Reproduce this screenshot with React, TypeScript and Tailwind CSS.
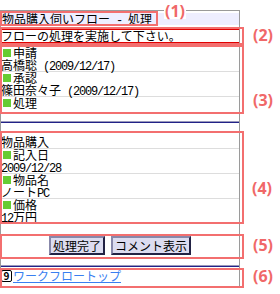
import React from "react";

const jp = "font-['Noto_Sans_CJK_JP',sans-serif] text-[12px] leading-[12px] text-black";

// half-width run: 6px per character like the phone font
function A({ children }: { children: React.ReactNode }) {
  return (
    <span className="font-['Liberation_Mono',monospace] text-[12px] tracking-[-1.2px] whitespace-pre">
      {children}
    </span>
  );
}

function Mark({ children }: { children: React.ReactNode }) {
  return (
    <div className="flex h-[12px] items-center">
      <span className="mx-[2px] inline-block h-[8px] w-[8px] bg-[#66cc33]" />
      <span>{children}</span>
    </div>
  );
}

function Line({ children }: { children: React.ReactNode }) {
  return <div className="h-[12px] whitespace-nowrap">{children}</div>;
}

const Sep = () => <div className="h-px bg-[#dddddd]" />;

const hr = "h-[2px] border-t border-b border-t-[#9999bb] border-b-[#222288]";
const btn =
  "h-[19px] border-2 border-solid border-t-[#8888aa] border-l-[#8888aa] border-r-[#222244] border-b-[#222244] bg-[#dcdcf0] px-[2px] leading-[14px] text-black";

function Box({ className }: { className: string }) {
  return <div className={`absolute border-2 border-[#f36f6f] ${className}`} />;
}

function Label({ text, className }: { text: string; className: string }) {
  return (
    <div
      className={`absolute bg-white px-[1px] font-['Noto_Sans',sans-serif] text-[16px] font-bold leading-[16px] text-[#f06868] ${className}`}
    >
      {text}
    </div>
  );
}

export default function App() {
  return (
    <div className="relative h-[294px] w-[280px] overflow-hidden bg-white">
      <div className={`mt-[10px] flex h-[278px] w-[240px] flex-col border border-[#9a9a9a] ${jp}`}>
        <div className="mt-[2px] h-[12px] whitespace-nowrap bg-[#eeeeff] pl-[1px]">
          物品購入伺いフロー<A> - </A>処理
        </div>
        <div className="mt-[4px] h-[14px] whitespace-nowrap border-y border-[#e00000]">
          フローの処理を実施して下さい。
        </div>

        <div className="mt-[4px]">
          <Mark>申請</Mark>
          <Line>
            高橋聡<A> (2009/12/17)</A>
          </Line>
          <Sep />
          <Mark>承認</Mark>
          <Line>
            篠田奈々子<A> (2009/12/17)</A>
          </Line>
          <Sep />
          <Mark>処理</Mark>
        </div>

        <div className={`mt-[12px] ${hr}`} />

        <div className="mt-[13px]">
          <Line>物品購入</Line>
          <Sep />
          <Mark>記入日</Mark>
          <Line>
            <A>2009/12/28</A>
          </Line>
          <Sep />
          <Mark>物品名</Mark>
          <Line>
            ノート<A>PC</A>
          </Line>
          <Sep />
          <Mark>価格</Mark>
          <Line>
            <A>12</A>万円
          </Line>
        </div>

        <div className="mt-[13px] flex justify-center gap-[6px]">
          <button type="button" className={btn}>
            処理完了
          </button>
          <button type="button" className={btn}>
            コメント表示
          </button>
        </div>

        <div className={`mt-[10px] ${hr}`} />

        <div className="mt-[3px] flex h-[12px] items-center whitespace-nowrap">
          <span className="flex h-[12px] w-[11px] items-center justify-center rounded-[2px] border border-black text-[10px] font-bold leading-[10px]">
            9
          </span>
          <a href="#" className="ml-[1px] text-[#3a7ff0] underline">
            ワークフロートップ
          </a>
        </div>
      </div>

      <Box className="left-0 top-[11px] h-[15px] w-[158px]" />
      <Label text="(1)" className="left-[164px] top-[3px]" />
      <Box className="left-0 top-[27px] h-[18px] w-[244px]" />
      <Label text="(2)" className="left-[252px] top-[27px]" />
      <Box className="left-0 top-[45px] h-[69px] w-[244px]" />
      <Label text="(3)" className="left-[252px] top-[92px]" />
      <Box className="left-0 top-[131px] h-[93px] w-[244px]" />
      <Label text="(4)" className="left-[251px] top-[180px]" />
      <Box className="left-0 top-[234px] h-[25px] w-[244px]" />
      <Label text="(5)" className="left-[252px] top-[237px]" />
      <Box className="left-0 top-[268px] h-[20px] w-[244px]" />
      <Label text="(6)" className="left-[252px] top-[268px]" />
    </div>
  );
}
